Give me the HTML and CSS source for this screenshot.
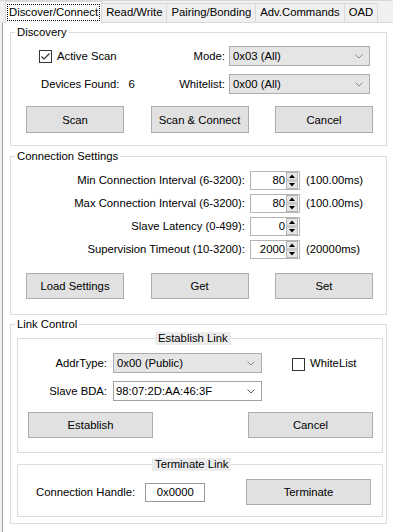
FILE: index.html
```html
<!DOCTYPE html>
<html lang="en">
<head>
  <meta charset="UTF-8">
  <meta name="viewport" content="width=device-width, initial-scale=1.0">
  <title>Discover/Connect</title>
  <link rel="stylesheet" href="styles.css">
</head>
<body>

<div class="window">
  <div class="tabs">
    <div class="tab active"><span class="focus">Discover/Connect</span></div>
    <div class="tab">Read/Write</div>
    <div class="tab">Pairing/Bonding</div>
    <div class="tab">Adv.Commands</div>
    <div class="tab">OAD</div>
  </div>

  <div class="panel">
    <!-- Discovery -->
    <fieldset class="group discovery">
      <legend>Discovery</legend>
      <div class="disc-row">
        <div class="disc-left check-left">
          <span class="checkbox">
            <svg width="11" height="11" viewBox="0 0 11 11"><polyline points="1.5,5.5 4,8 9.5,2.5" fill="none" stroke="#333" stroke-width="1.2"/></svg>
          </span>
          <span>Active Scan</span>
        </div>
        <span class="field-label">Mode:</span>
        <div class="combo list">
          <span>0x03 (All)</span>
          <svg class="chev" width="8" height="5" viewBox="0 0 8 5"><polyline points="0.5,0.5 4,4 7.5,0.5" fill="none" stroke="#8a8a8a"/></svg>
        </div>
      </div>
      <div class="disc-row">
        <div class="disc-left found-left">
          <span>Devices Found:</span>
          <span class="found-count">6</span>
        </div>
        <span class="field-label">Whitelist:</span>
        <div class="combo list">
          <span>0x00 (All)</span>
          <svg class="chev" width="8" height="5" viewBox="0 0 8 5"><polyline points="0.5,0.5 4,4 7.5,0.5" fill="none" stroke="#8a8a8a"/></svg>
        </div>
      </div>
      <div class="btn-row">
        <button class="btn tall">Scan</button>
        <button class="btn tall">Scan &amp; Connect</button>
        <button class="btn tall">Cancel</button>
      </div>
    </fieldset>

    <!-- Connection Settings -->
    <fieldset class="group settings">
      <legend>Connection Settings</legend>
      <div class="set-row">
        <span class="set-label">Min Connection Interval (6-3200):</span>
        <div class="spin"><span class="spin-val">80</span><svg class="spin-btns" width="12" height="17" viewBox="0 0 12 17"><rect x="0.5" y="0.5" width="11" height="7.5" fill="#e6e6e6" stroke="#b5b5b5"/><rect x="0.5" y="9" width="11" height="7.5" fill="#e6e6e6" stroke="#b5b5b5"/><polygon points="3,6 6,2.5 9,6" fill="#000"/><polygon points="3,11 6,14.5 9,11" fill="#000"/></svg></div>
        <span class="unit">(100.00ms)</span>
      </div>
      <div class="set-row">
        <span class="set-label">Max Connection Interval (6-3200):</span>
        <div class="spin"><span class="spin-val">80</span><svg class="spin-btns" width="12" height="17" viewBox="0 0 12 17"><rect x="0.5" y="0.5" width="11" height="7.5" fill="#e6e6e6" stroke="#b5b5b5"/><rect x="0.5" y="9" width="11" height="7.5" fill="#e6e6e6" stroke="#b5b5b5"/><polygon points="3,6 6,2.5 9,6" fill="#000"/><polygon points="3,11 6,14.5 9,11" fill="#000"/></svg></div>
        <span class="unit">(100.00ms)</span>
      </div>
      <div class="set-row">
        <span class="set-label">Slave Latency (0-499):</span>
        <div class="spin"><span class="spin-val">0</span><svg class="spin-btns" width="12" height="17" viewBox="0 0 12 17"><rect x="0.5" y="0.5" width="11" height="7.5" fill="#e6e6e6" stroke="#b5b5b5"/><rect x="0.5" y="9" width="11" height="7.5" fill="#e6e6e6" stroke="#b5b5b5"/><polygon points="3,6 6,2.5 9,6" fill="#000"/><polygon points="3,11 6,14.5 9,11" fill="#000"/></svg></div>
      </div>
      <div class="set-row">
        <span class="set-label">Supervision Timeout (10-3200):</span>
        <div class="spin"><span class="spin-val">2000</span><svg class="spin-btns" width="12" height="17" viewBox="0 0 12 17"><rect x="0.5" y="0.5" width="11" height="7.5" fill="#e6e6e6" stroke="#b5b5b5"/><rect x="0.5" y="9" width="11" height="7.5" fill="#e6e6e6" stroke="#b5b5b5"/><polygon points="3,6 6,2.5 9,6" fill="#000"/><polygon points="3,11 6,14.5 9,11" fill="#000"/></svg></div>
        <span class="unit">(20000ms)</span>
      </div>
      <div class="btn-row settings-btns">
        <button class="btn">Load Settings</button>
        <button class="btn">Get</button>
        <button class="btn">Set</button>
      </div>
    </fieldset>

    <!-- Link Control -->
    <fieldset class="group link">
      <legend>Link Control</legend>

      <fieldset class="sub establish">
        <legend class="sub-title est-title">Establish Link</legend>
        <div class="est-row">
          <span class="est-label">AddrType:</span>
          <div class="combo list addr">
            <span>0x00 (Public)</span>
            <svg class="chev" width="8" height="5" viewBox="0 0 8 5"><polyline points="0.5,0.5 4,4 7.5,0.5" fill="none" stroke="#8a8a8a"/></svg>
          </div>
          <span class="checkbox white-box"></span>
          <span>WhiteList</span>
        </div>
        <div class="est-row">
          <span class="est-label">Slave BDA:</span>
          <div class="combo edit addr">
            <span>98:07:2D:AA:46:3F</span>
            <svg class="chev" width="8" height="5" viewBox="0 0 8 5"><polyline points="0.5,0.5 4,4 7.5,0.5" fill="none" stroke="#606060"/></svg>
          </div>
        </div>
        <div class="btn-row est-btns">
          <button class="btn wide">Establish</button>
          <button class="btn wide">Cancel</button>
        </div>
      </fieldset>

      <fieldset class="sub terminate">
        <legend class="sub-title term-title">Terminate Link</legend>
        <div class="term-row">
          <span>Connection Handle:</span>
          <div class="textbox">0x0000</div>
          <button class="btn wide term-btn">Terminate</button>
        </div>
      </fieldset>
    </fieldset>
  </div>
</div>

</body>
</html>
```

FILE: styles.css
```css
* {
  box-sizing: border-box;
}

body {
  margin: 0;
  height: 100vh;
  overflow: hidden;
  font-family: "Liberation Sans", Arial, sans-serif;
  font-size: 11.3px;
  color: #000;
  background-color: #f0f0f0;
}

.window {
  display: flex;
  flex-direction: column;
  height: 100%;
  border-top: 1px solid #dadada;
}

/* Tab strip */
.tabs {
  display: flex;
  align-items: flex-end;
  height: 21px;
  padding-left: 5px;
}

.tab {
  height: 19px;
  line-height: 17px;
  padding: 0 4px;
  border: 1px solid #d9d9d9;
  border-left: none;
  border-bottom: none;
  background-color: #f0f0f0;
  white-space: nowrap;
}

.tab.active {
  position: relative;
  z-index: 1;
  height: 22px;
  margin-bottom: -1px;
  padding: 2px 1px 0;
  border-left: 1px solid #d9d9d9;
  background-color: #fff;
}

.focus {
  display: block;
  padding: 0 1px;
  line-height: 15px;
  border: 1px dotted #000;
}

/* Tab page */
.panel {
  flex: 1;
  margin-left: 2px;
  padding: 3px 0 0 7px;
  border-left: 1px solid #a0a0a0;
  border-top: 1px solid #d9d9d9;
  background-color: #fff;
}

.group,
.sub {
  min-width: 0;
  margin: 0;
  padding: 0;
  border: 1px solid #dcdcdc;
}

.group {
  width: 377px;
}

.group > legend {
  margin-left: 4px;
  padding: 0 2px;
  line-height: 13px;
}

/* Discovery */
.discovery {
  padding: 7px 0 12px;
}

.disc-row {
  display: flex;
  align-items: center;
  height: 20px;
}

.disc-row + .disc-row {
  margin-top: 8px;
}

.disc-left {
  display: flex;
  align-items: center;
  width: 150px;
}

.check-left {
  padding-left: 28px;
}

.found-left {
  padding-left: 30px;
}

.found-count {
  margin-left: 9px;
}

.field-label {
  width: 64px;
  margin-right: 4px;
  text-align: right;
}

.checkbox {
  display: flex;
  align-items: center;
  justify-content: center;
  width: 13px;
  height: 13px;
  margin-right: 5px;
  border: 1px solid #333;
  background-color: #fff;
}

.combo {
  display: flex;
  align-items: center;
  justify-content: space-between;
  height: 20px;
  padding: 0 6px 0 3px;
  border: 1px solid #acacac;
}

.combo.list {
  width: 141px;
  background-color: #e5e5e5;
}

.combo.edit {
  background-color: #fff;
  border-color: #a2a2a2;
  padding-left: 2px;
}

.combo.addr {
  width: 149px;
}

/* Buttons */
.btn-row {
  display: flex;
  justify-content: space-between;
  margin-top: 12px;
  padding: 0 13px 0 15px;
}

.btn {
  width: 98px;
  height: 26px;
  padding: 0;
  font-family: inherit;
  font-size: inherit;
  color: #000;
  background-color: #e1e1e1;
  border: 1px solid #adadad;
}

.btn.tall {
  height: 27px;
}

.btn.wide {
  width: 125px;
}

/* Connection Settings */
.settings {
  margin-top: 4px;
  padding: 7px 0 15px;
}

.set-row {
  display: flex;
  align-items: center;
  height: 20px;
}

.set-row + .set-row {
  margin-top: 3px;
}

.set-label {
  width: 234px;
  margin-right: 5px;
  text-align: right;
}

.spin {
  display: flex;
  align-items: center;
  width: 50px;
  height: 19px;
  padding: 0 1px;
  border: 1px solid #b4b4b4;
  background-color: #fff;
}

.spin-val {
  flex: 1;
  padding-right: 1px;
  text-align: right;
}

.unit {
  margin-left: 6px;
}

.settings-btns {
  margin-top: 14px;
}

/* Link Control */
.link {
  margin-top: 3px;
  padding: 0 0 6px;
}

.sub {
  width: 366px;
  margin-left: 6px;
}

.sub-title {
  padding: 0 3px;
  line-height: 13px;
  background-color: #ececec;
}

.establish {
  margin-top: 1px;
  padding: 8px 0 14px;
}

.est-title {
  margin-left: 137px;
}

.est-row {
  display: flex;
  align-items: center;
  height: 20px;
}

.est-row + .est-row {
  margin-top: 8px;
}

.est-label {
  width: 89px;
  margin-right: 6px;
  text-align: right;
}

.white-box {
  margin-left: 30px;
  margin-top: 3px;
}

.est-btns {
  margin-top: 11px;
  padding: 0 9px 0 10px;
}

.terminate {
  margin-top: 5px;
  padding: 8px 0 11px;
}

.term-title {
  margin-left: 134px;
}

.term-row {
  display: flex;
  align-items: center;
  height: 26px;
  padding: 0 11px 0 18px;
}

.textbox {
  width: 60px;
  height: 19px;
  margin-left: 10px;
  line-height: 17px;
  text-align: center;
  border: 1px solid #9a9a9a;
}

.term-btn {
  margin-left: auto;
}
```
